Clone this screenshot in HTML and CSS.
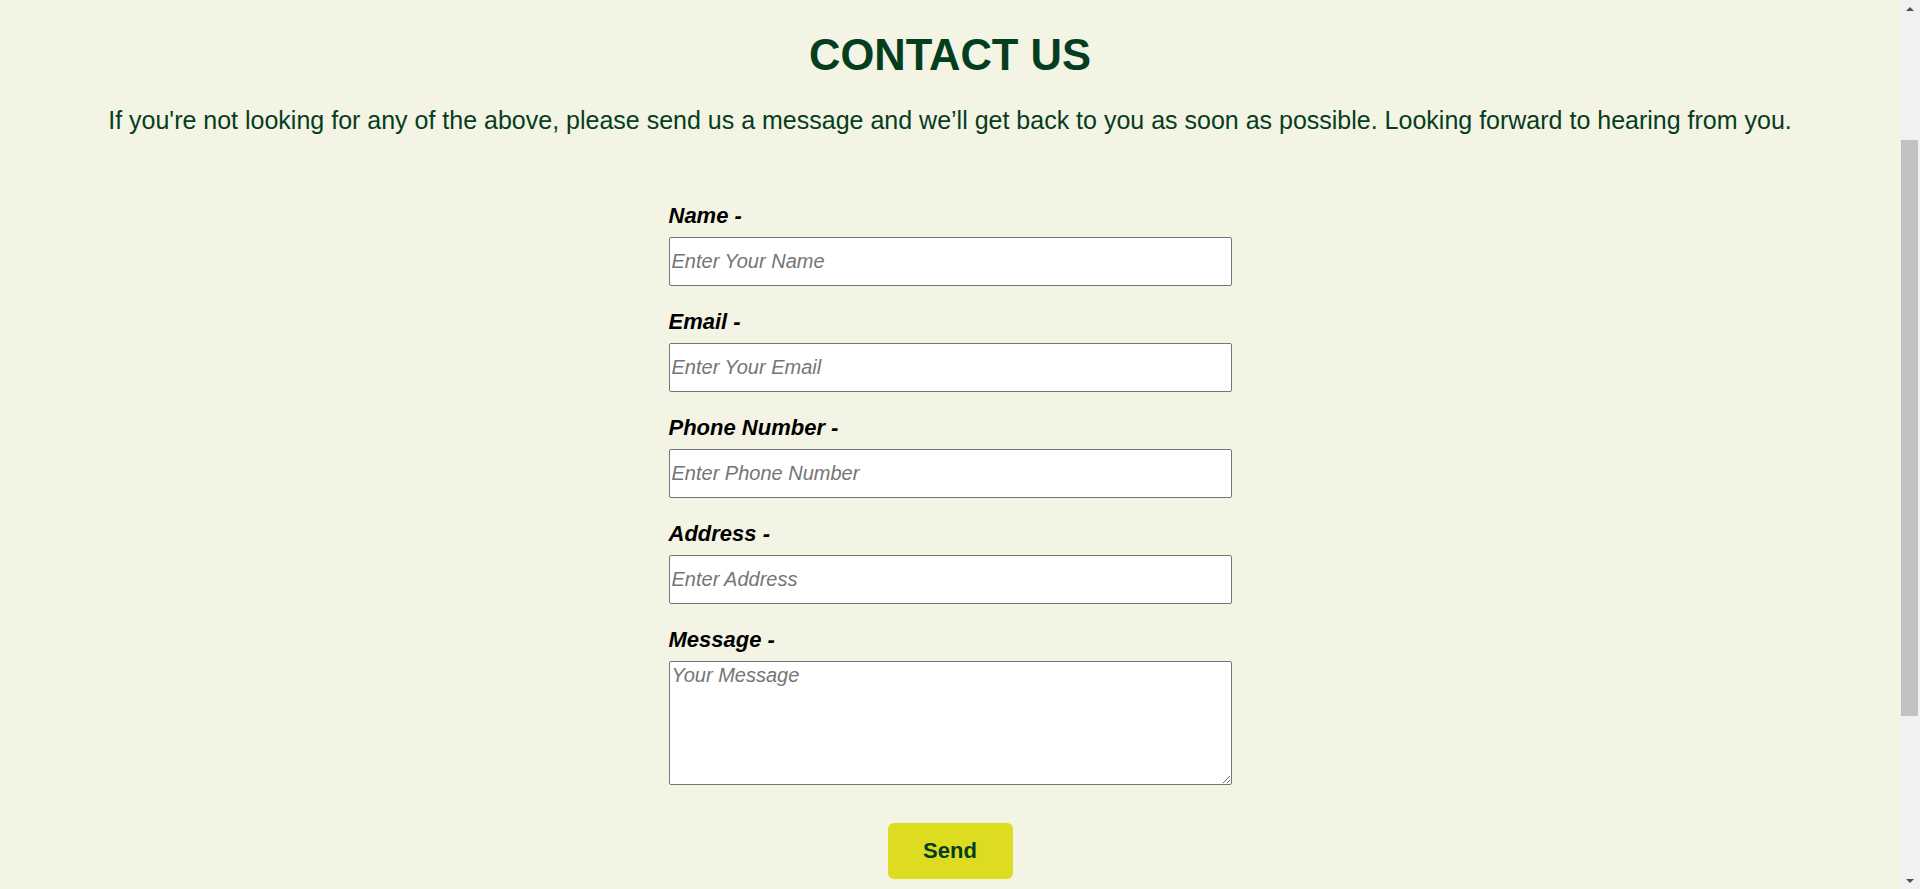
FILE: index.html
```html
<!DOCTYPE html>
<html lang="en">
<head>
<meta charset="utf-8">
<title>Contact Us</title>
<link rel="stylesheet" href="styles.css">
</head>
<body>
<section class="contact">
  <h1 class="contact-title">CONTACT US</h1>
  <p class="contact-intro">If you're not looking for any of the above, please send us a message and we’ll get back to you as soon as possible. Looking forward to hearing from you.</p>
  <form class="contact-form">
    <div class="field">
      <label class="field-label" for="name">Name -</label>
      <input class="field-input" id="name" type="text" placeholder="Enter Your Name">
    </div>
    <div class="field">
      <label class="field-label" for="email">Email -</label>
      <input class="field-input" id="email" type="email" placeholder="Enter Your Email">
    </div>
    <div class="field">
      <label class="field-label" for="phone">Phone Number -</label>
      <input class="field-input" id="phone" type="tel" placeholder="Enter Phone Number">
    </div>
    <div class="field">
      <label class="field-label" for="address">Address -</label>
      <input class="field-input" id="address" type="text" placeholder="Enter Address">
    </div>
    <div class="field field-last">
      <label class="field-label" for="message">Message -</label>
      <textarea class="field-input field-textarea" id="message" placeholder="Your Message"></textarea>
    </div>
    <div class="actions">
      <button class="send-btn" type="submit">Send</button>
    </div>
  </form>
</section>
<div class="scrollbar" aria-hidden="true">
  <div class="scrollbar-btn"><span class="arrow arrow-up"></span></div>
  <div class="scrollbar-track"><div class="scrollbar-thumb"></div></div>
  <div class="scrollbar-btn"><span class="arrow arrow-down"></span></div>
</div>
</body>
</html>
```

FILE: styles.css
```css
body {
  margin: 0;
  padding-right: 20px;
  background: #f3f4e4;
  font-family: "Liberation Sans", Arial, sans-serif;
  color: #063d20;
}

.contact {
  padding-top: 31px;
  padding-bottom: 40px;
  text-align: center;
}

.contact-title {
  margin: 0;
  font-size: 43.5px;
  font-weight: 700;
  line-height: normal;
  color: #053d1f;
}

.contact-intro {
  margin: 26px 0 0;
  font-size: 25px;
  line-height: normal;
}

.contact-form {
  width: 563px;
  margin: 68px auto 0;
  text-align: left;
}

.field {
  display: flex;
  flex-direction: column;
  margin-bottom: 23px;
}

.field-last {
  margin-bottom: 0;
}

.field-label {
  margin-bottom: 8px;
  font-size: 22px;
  font-weight: 700;
  font-style: italic;
  line-height: normal;
  color: #000;
}

.field-input {
  box-sizing: border-box;
  height: 49px;
  margin: 0;
  padding: 1px 2px;
  border: 1px solid #767676;
  border-radius: 2px;
  background: #fff;
  font-family: "Liberation Sans", Arial, sans-serif;
  font-size: 20px;
  font-style: italic;
  color: #000;
}

.field-input::placeholder {
  color: #757575;
}

.field-textarea {
  height: 124px;
  padding: 2px;
  resize: both;
}

.actions {
  display: flex;
  justify-content: center;
  margin-top: 38px;
}

.send-btn {
  width: 125px;
  height: 56px;
  border: 0;
  border-radius: 6px;
  background: #dddc20;
  font-family: "Liberation Sans", Arial, sans-serif;
  font-size: 22px;
  font-weight: 700;
  color: #063d20;
  cursor: pointer;
}

/* browser scrollbar overlay (page is scrolled in the reference) */
.scrollbar {
  position: fixed;
  top: 0;
  right: 0;
  bottom: 0;
  width: 20px;
  display: flex;
  flex-direction: column;
  background: #f1f1f1;
}

.scrollbar-btn {
  height: 17px;
  display: flex;
  align-items: center;
  justify-content: center;
  flex: none;
}

.scrollbar-track {
  flex: 1;
}

.scrollbar-thumb {
  margin: 123px 2px 0 1px;
  height: 576px;
  background: #c1c1c1;
}

.arrow {
  width: 0;
  height: 0;
  border-left: 4.5px solid transparent;
  border-right: 4.5px solid transparent;
}

.arrow-up {
  border-bottom: 4px solid #505050;
}

.arrow-down {
  border-top: 4px solid #505050;
}
```
